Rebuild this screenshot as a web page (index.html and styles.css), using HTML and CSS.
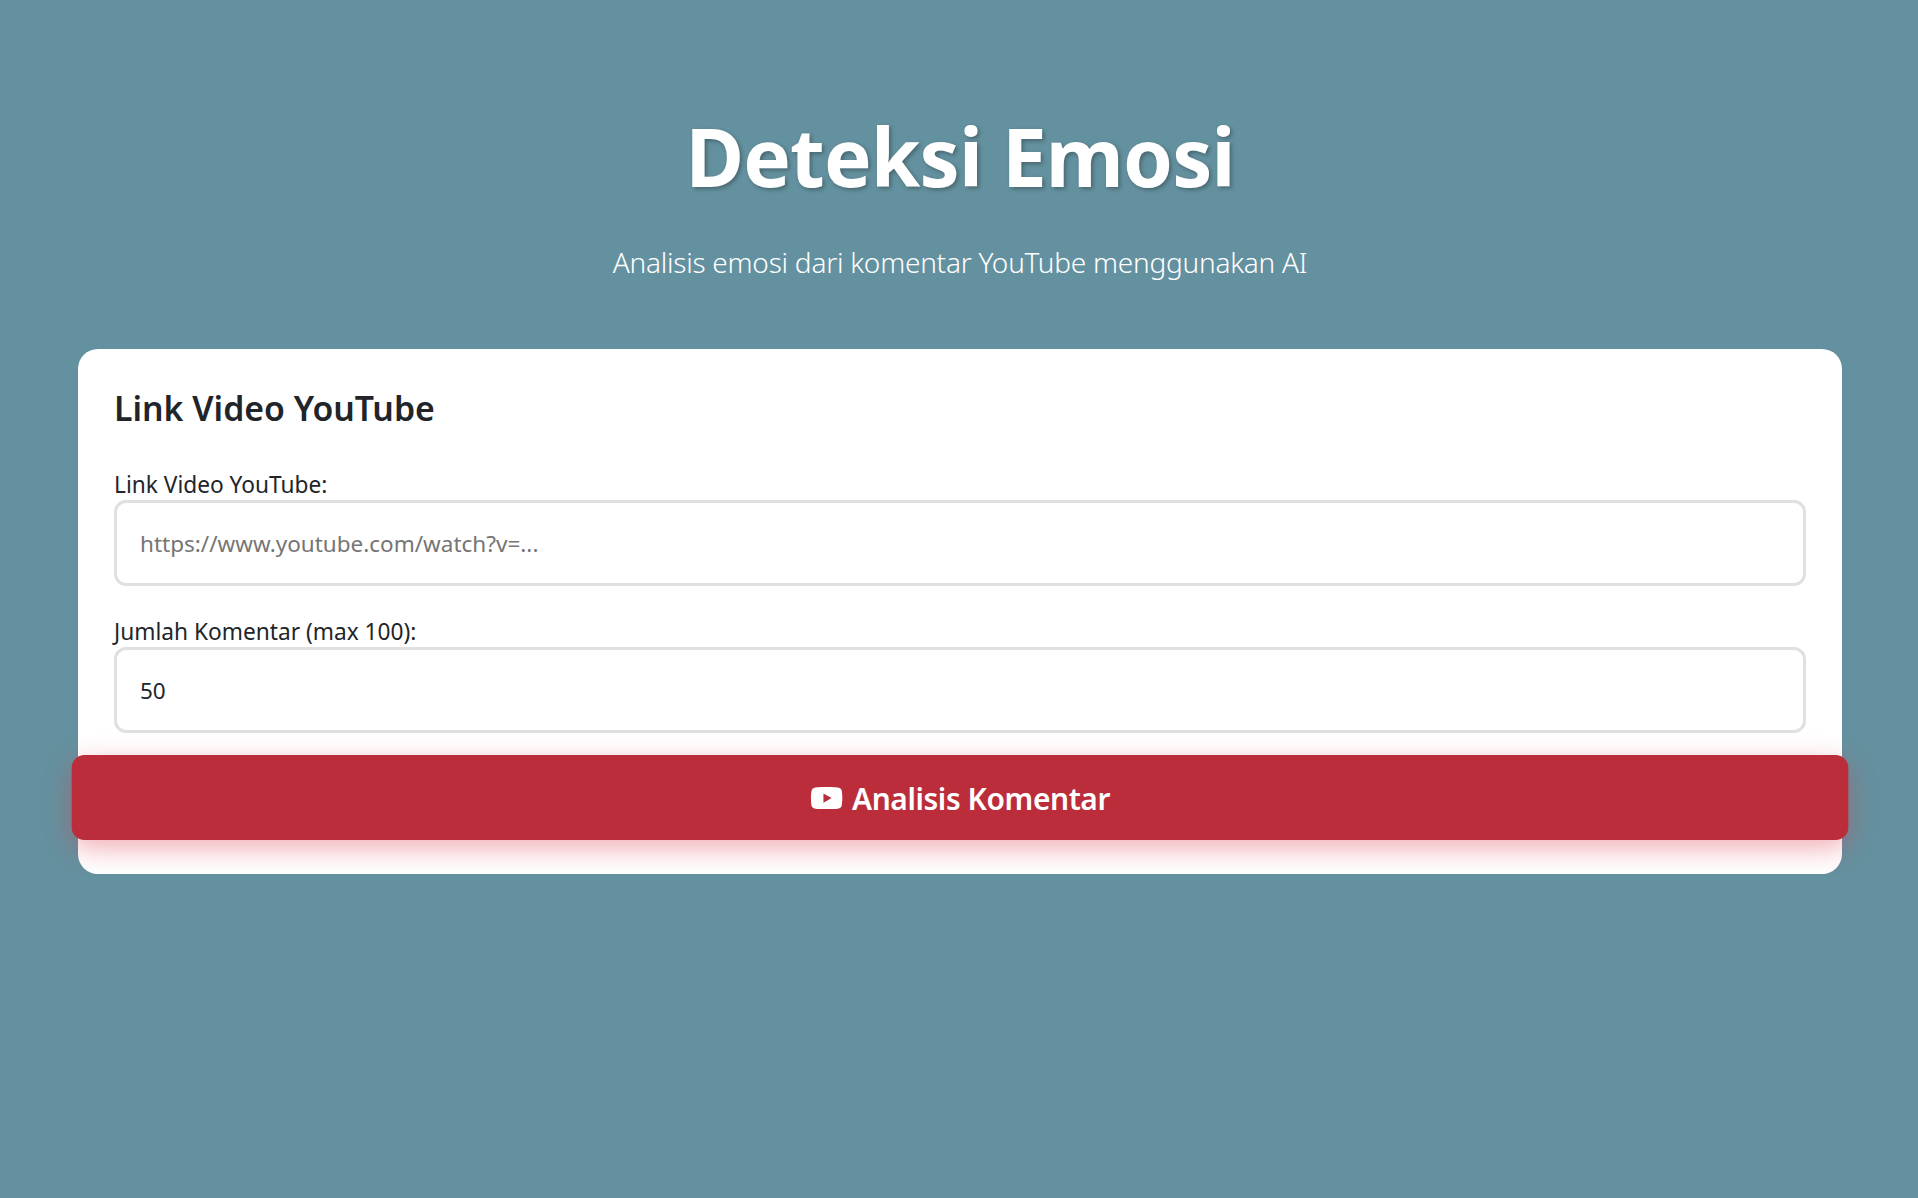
FILE: index.html
```html
<!DOCTYPE html>
<html lang="id">
<head>
<meta charset="utf-8">
<title>Deteksi Emosi</title>
<link rel="stylesheet" href="styles.css">
</head>
<body>
<main class="page">
  <header class="hero">
    <h1 class="hero-title">Deteksi Emosi</h1>
    <p class="hero-sub">Analisis emosi dari komentar YouTube menggunakan AI</p>
  </header>
  <section class="card">
    <h2 class="card-title">Link Video YouTube</h2>
    <form class="form">
      <div class="field">
        <label class="field-label" for="url">Link Video YouTube:</label>
        <input class="field-input" id="url" type="text" placeholder="https://www.youtube.com/watch?v=...">
      </div>
      <div class="field">
        <label class="field-label" for="count">Jumlah Komentar (max 100):</label>
        <input class="field-input" id="count" type="text" value="50">
      </div>
      <button class="submit" type="button">
        <svg class="submit-icon" viewBox="0 0 576 512" aria-hidden="true"><path fill="currentColor" d="M549.7 124.1c-6.3-23.7-24.8-42.3-48.3-48.6C458.8 64 288 64 288 64S117.2 64 74.6 75.5c-23.5 6.3-42 24.9-48.3 48.6C14.900 167 14.900 256.400 14.900 256.400s0 89.400 11.400 132.300c6.300 23.700 24.800 41.500 48.300 47.800C117.200 448 288 448 288 448s170.800 0 213.400-11.500c23.500-6.300 42-24.200 48.300-47.800 11.400-42.900 11.400-132.300 11.400-132.300s0-89.400-11.400-132.300zM232.200 337.600V175.200l142.700 81.200-142.700 81.200z"/></svg>
        <span>Analisis Komentar</span>
      </button>
    </form>
  </section>
</main>
</body>
</html>
```
FILE: styles.css
```css
* { box-sizing: border-box; }
html, body { margin: 0; height: 100%; }
body {
  background: #64919f;
  color: #212529;
  font-family: "Noto Sans", "Open Sans", sans-serif;
}
.page {
  padding: 108px 76px 0 78px;
}
.hero {
  text-align: center;
  color: #fff;
  margin-bottom: 66px;
}
.hero-title {
  margin: 0 0 37px;
  font-size: 80px;
  line-height: 1.2;
  font-weight: 700;
  letter-spacing: -0.85px;
  text-shadow: 2px 2px 4px rgba(0, 0, 0, .3);
}
.hero-sub {
  margin: 0;
  font-size: 28px;
  line-height: 1.5;
  font-weight: 300;
  letter-spacing: -0.24px;
}
.card {
  background: #fff;
  border-radius: 20px;
  padding: 36px;
}
.card-title {
  margin: 3px 0 40px;
  font-size: 33.8px;
  line-height: 1.2;
  font-weight: 600;
}
.form { display: flex; flex-direction: column; }
.field { margin-bottom: 24px; }
.field + .field { margin-top: 6px; }
.field-label {
  display: block;
  font-size: 22.7px;
  line-height: 31px;
}
.field-input {
  display: block;
  width: 100%;
  height: 86px;
  padding: 2px 23px 0;
  border: 3px solid #e0e0e0;
  border-radius: 12px;
  background: #fff;
  color: #212529;
  font: inherit;
  font-size: 22.5px;
  outline: none;
}
.field-input::placeholder { color: #757575; opacity: 1; }
.submit {
  display: flex;
  align-items: center;
  justify-content: center;
  gap: 8px;
  height: 81px;
  border: 0;
  border-radius: 12px;
  background: #bb2d3b;
  color: #fff;
  font: inherit;
  font-size: 28.5px;
  font-weight: 600;
  letter-spacing: -0.4px;
  transform: scale(1.05);
  box-shadow: 0 8px 25px rgba(220, 53, 69, .4);
}
.submit-icon { width: 32px; height: 28px; }
```
